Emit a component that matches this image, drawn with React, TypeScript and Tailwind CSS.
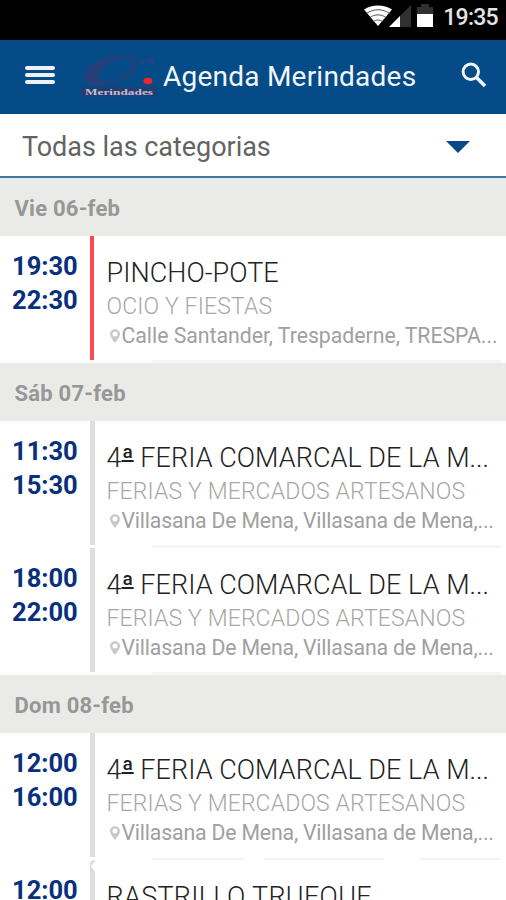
type Event = {
  start: string;
  end: string;
  title: string;
  category: string;
  place: string;
  active?: boolean;
  notched?: boolean;
  rules?: "none" | "full" | "broken";
};

const FAIR: Omit<Event, "start" | "end"> = {
  title: "4ª FERIA COMARCAL DE LA M...",
  category: "FERIAS Y MERCADOS ARTESANOS",
  place: "Villasana De Mena, Villasana de Mena,...",
};

const DAYS: { label: string; events: Event[] }[] = [
  {
    label: "Vie 06-feb",
    events: [
      {
        start: "19:30",
        end: "22:30",
        title: "PINCHO-POTE",
        category: "OCIO Y FIESTAS",
        place: "Calle Santander, Trespaderne, TRESPA...",
        active: true,
      },
    ],
  },
  {
    label: "Sáb 07-feb",
    events: [
      { start: "11:30", end: "15:30", ...FAIR },
      { start: "18:00", end: "22:00", ...FAIR },
    ],
  },
  {
    label: "Dom 08-feb",
    events: [
      { start: "12:00", end: "16:00", ...FAIR, rules: "broken" },
      {
        start: "12:00",
        end: "",
        title: "RASTRILLO TRUEQUE",
        category: "",
        place: "",
        notched: true,
        rules: "none",
      },
    ],
  },
];

function StatusBar() {
  return (
    <div className="flex h-10 shrink-0 items-start justify-end bg-black pr-2">
      <svg className="mt-1 h-6 w-[74px]" viewBox="0 0 74 24" fill="none">
        <path d="M2 5.5C10 0 22 0 30 5.5L16 22Z" fill="#fff" />
        <path d="M4.5 9.5C11 4.5 21 4.5 27.5 9.5M8 13.5C12.5 10 19.5 10 24 13.5M11.5 17.5C14 15.5 18 15.5 20.5 17.5" stroke="#555" strokeWidth="1" />
        <path d="M27 23L49 1V23Z" fill="#303030" />
        <path d="M27 23L38 12V23Z" fill="#fff" />
        <path d="M55 3h4V0h8v3h4v7H55Z" fill="#303030" />
        <path d="M55 10h16v13H55Z" fill="#fff" />
      </svg>
      <span className="ml-[7px] mt-[3px] text-[23px] font-medium leading-[29px] tracking-[-0.7px] text-[#e4e4e4]">19:35</span>
    </div>
  );
}

function Logo() {
  return (
    <svg className="h-[46px] w-[76px]" viewBox="0 0 76 46">
      <path
        fillRule="evenodd"
        fill="#273f79"
        d="M40 2C54 0 59 8 51 18C42 28 26 32 11 31C-1 29-1 20 9 12C18 5 29 2 40 2ZM39 4C28 6 17 14 17 22C17 28 25 30 35 26C45 21 53 13 51 7C49 4 44 3 39 4Z"
      />
      <path d="M58 5h5v5h-5zM65 4h8v6h-8z" fill="#174885" />
      <ellipse cx="66" cy="27" rx="4.4" ry="3.3" fill="#ee2527" />
      <rect y="33.5" width="74" height="9" fill="#2b3a6c" />
      <text x="3" y="40.6" textLength="68" lengthAdjust="spacingAndGlyphs" fontSize="9" fontWeight="700" fontFamily="Liberation Serif, serif" fill="#b9c3dc">
        Merindades
      </text>
    </svg>
  );
}

function Header() {
  return (
    <header className="flex h-[74px] shrink-0 items-center bg-[#054b87]">
      <div className="-mt-1 ml-[25px] flex w-[30px] flex-col gap-[3px]">
        <span className="h-1 rounded-sm bg-[#eef2f6]" />
        <span className="h-1 rounded-sm bg-[#eef2f6]" />
        <span className="h-1 rounded-sm bg-[#eef2f6]" />
      </div>
      <div className="ml-[27px]">
        <Logo />
      </div>
      <h1 className="ml-[5px] flex-1 whitespace-nowrap text-[28px] leading-8 tracking-[0.23px] text-[#f2f6fa]">Agenda Merindades</h1>
      <svg className="-mt-1 mr-[19px] h-[26px] w-[26px]" viewBox="0 0 26 26" fill="none" stroke="#f4f7fa">
        <circle cx="9.8" cy="9.8" r="7.7" strokeWidth="3" />
        <path d="M15.5 15.5L24 24" strokeWidth="3.6" />
      </svg>
    </header>
  );
}

function CategoryFilter() {
  return (
    <div className="flex h-16 shrink-0 items-center justify-between border-b-2 border-[#3f7799] bg-white pl-[22px] pr-9">
      <span className="mt-1 whitespace-nowrap text-[27px] leading-8 tracking-[-0.04px] text-[#636363]">Todas las categorias</span>
      <svg className="mt-[3px] h-3 w-6" viewBox="0 0 24 12">
        <path d="M0 0H24L12 12Z" fill="#08498a" />
      </svg>
    </div>
  );
}

function Title({ text }: { text: string }) {
  const [before, after] = text.split("ª");
  if (after === undefined) return <>{text}</>;
  return (
    <>
      {before}
      <span className="font-normal underline decoration-[1.5px] underline-offset-[-7px] [text-decoration-skip-ink:none]">ª</span>
      {after}
    </>
  );
}

function EventRow({ start, end, title, category, place, active, notched, rules }: Event) {
  return (
    <article className="flex h-[127px] shrink-0 flex-col bg-white">
      <div className="flex h-[124px]">
        <div className="w-[89.5px] shrink-0 pl-3 pt-[13px] text-[25.5px] font-bold leading-[34px] text-[#08307c]">
          <div>{start}</div>
          {end && <div>{end}</div>}
        </div>
        <div className={active ? "w-[4.5px] shrink-0 bg-[#fa4a52]" : "w-[5px] shrink-0 bg-[#dedede]"}>
          {notched && (
            <svg className="h-3 w-[5px]" viewBox="0 0 5 12">
              <path d="M0 0L3 0L0 2ZM5 1L1 6L5 12Z" fill="#fff" />
            </svg>
          )}
        </div>
        <div className={active ? "flex min-w-0 flex-1 flex-col pl-[12.5px] pt-[21px]" : "flex min-w-0 flex-1 flex-col pl-3 pt-[21px]"}>
          <div
            className={
              notched
                ? "whitespace-nowrap text-[27px] font-light leading-8 tracking-[0.3px] text-[#222]"
                : "whitespace-nowrap text-[27px] font-light leading-8 tracking-[0.05px] text-[#222]"
            }
          >
            <Title text={title} />
          </div>
          {category && (
            <div className="mt-1 whitespace-nowrap text-[23px] font-light leading-7 tracking-[0.13px] text-[#a8a8a8]">{category}</div>
          )}
          {place && (
            <div
              className={
                active
                  ? "flex items-center whitespace-nowrap text-[21.25px] leading-[30px] tracking-[-0.02px] text-[#a0a0a0]"
                  : "flex items-center whitespace-nowrap text-[21.25px] leading-[30px] tracking-[-0.17px] text-[#a0a0a0]"
              }
            >
              <svg className="ml-[3px] mr-[2px] h-[14px] w-[10px] shrink-0" viewBox="0 0 11 15">
                <path fillRule="evenodd" fill="#c9c9c9" d="M5.5 0C2.2 0 0 2.4 0 5.3C0 9 5.5 15 5.5 15S11 9 11 5.3C11 2.4 8.8 0 5.5 0ZM5.5 2.5A2.7 2.7 0 1 1 5.5 8A2.7 2.7 0 1 1 5.5 2.5Z" />
              </svg>
              <span>{place}</span>
            </div>
          )}
        </div>
      </div>
      {rules === "none" ? null : rules === "broken" ? (
        <div className="flex h-[3px] pl-[152px] pr-[5px] pt-px">
          <span className="w-[92px] bg-[#f3f3f3]" />
          <span className="ml-5 w-[120px] bg-[#f3f3f3]" />
          <span className="ml-auto w-[81px] bg-[#f3f3f3]" />
        </div>
      ) : (
        <div className="ml-[152px] mr-[5px] h-[3px] bg-[#f5f5f4]" />
      )}
    </article>
  );
}

export default function App() {
  return (
    <main className="flex h-[900px] w-[506px] flex-col overflow-hidden bg-white font-['Roboto',sans-serif]">
      <StatusBar />
      <Header />
      <CategoryFilter />
      {DAYS.map((day) => (
        <section key={day.label} className="shrink-0">
          <h2 className="flex h-[58px] items-center bg-[#eaeae8] pl-[14.5px] pt-[3px] text-[22px] font-bold leading-7 tracking-[0.23px] text-[#979795]">
            {day.label}
          </h2>
          {day.events.map((event, index) => (
            <EventRow key={index} {...event} />
          ))}
        </section>
      ))}
    </main>
  );
}
